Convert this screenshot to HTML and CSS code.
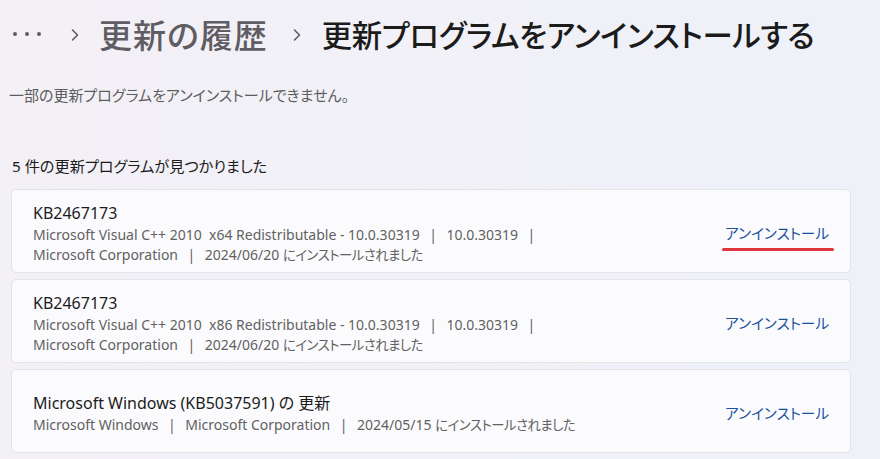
FILE: index.html
```html
<!DOCTYPE html>
<html lang="ja">
<head>
<meta charset="utf-8">
<link rel="stylesheet" href="styles.css">
</head>
<body>
<div class="page">
  <div class="crumbs">
    <span class="more"><i></i><i></i><i></i></span>
    <svg class="chev" width="8" height="14" viewBox="0 0 8 14"><path d="M1.5 2 L6.5 7 L1.5 12" fill="none" stroke="#5f5c63" stroke-width="1.6" stroke-linecap="round" stroke-linejoin="round"/></svg>
    <span class="parent">更新の履歴</span>
    <svg class="chev" width="8" height="14" viewBox="0 0 8 14"><path d="M1.5 2 L6.5 7 L1.5 12" fill="none" stroke="#5f5c63" stroke-width="1.6" stroke-linecap="round" stroke-linejoin="round"/></svg>
    <span class="current">更新プログラムをアンインストールする</span>
  </div>
  <p class="note">一部の更新プログラムをアンインストールできません。</p>
  <p class="count">5 件の更新プログラムが見つかりました</p>
  <div class="list">
    <div class="card">
      <div class="info">
        <div class="name">KB2467173</div>
        <div class="meta">Microsoft Visual C++ 2010&nbsp; x64 Redistributable - 10.0.30319<span class="sep">|</span>10.0.30319<span class="sep">|</span></div>
        <div class="meta">Microsoft Corporation<span class="sep">|</span>2024/06/20 <span class="ja">にインストールされました</span></div>
      </div>
      <div class="action marked">アンインストール</div>
    </div>
    <div class="card">
      <div class="info">
        <div class="name">KB2467173</div>
        <div class="meta">Microsoft Visual C++ 2010&nbsp; x86 Redistributable - 10.0.30319<span class="sep">|</span>10.0.30319<span class="sep">|</span></div>
        <div class="meta">Microsoft Corporation<span class="sep">|</span>2024/06/20 <span class="ja">にインストールされました</span></div>
      </div>
      <div class="action">アンインストール</div>
    </div>
    <div class="card">
      <div class="info">
        <div class="name">Microsoft Windows (KB5037591) の 更新</div>
        <div class="meta">Microsoft Windows<span class="sep">|</span>Microsoft Corporation<span class="sep">|</span>2024/05/15 <span class="ja">にインストールされました</span></div>
      </div>
      <div class="action">アンインストール</div>
    </div>
  </div>
</div>
</body>
</html>
```
FILE: styles.css
```css
html, body {
  margin: 0;
  height: 100%;
}
body {
  background: linear-gradient(to right, #f3f0f6, #f1f1f7 50%, #eef1f8);
  font-family: "Noto Sans", "Noto Sans CJK JP", sans-serif;
  font-feature-settings: "palt";
  color: #1b1b1b;
  overflow: hidden;
}
.page {
  padding: 0 29px 0 11px;
}
.crumbs {
  display: flex;
  align-items: center;
  height: 68px;
  font-family: "Noto Sans CJK JP", sans-serif;
  font-weight: 500;
  white-space: nowrap;
}
.more {
  display: flex;
  gap: 8px;
  margin-left: 2px;
}
.more i {
  width: 4px;
  height: 4px;
  border-radius: 50%;
  background: #5f5c63;
}
.chev {
  flex: none;
  margin: 2px 20px 0 30px;
}
.parent + .chev {
  margin-left: 25px;
  margin-right: 21px;
}
.parent {
  font-size: 33px;
  color: #5f5c63;
  letter-spacing: 1px;
}
.current {
  font-size: 30.4px;
  color: #1b1b1b;
  letter-spacing: -0.35px;
}
.note {
  margin: 16px 0 0 -2px;
  font-size: 15px;
  color: #5d5d5d;
  line-height: 22px;
  font-family: "Noto Sans CJK JP", sans-serif;
}
.count {
  margin: 49px 0 0 1px;
  font-size: 15.2px;
  line-height: 22px;
  color: #1b1b1b;
  font-family: "Noto Sans", "Noto Sans CJK JP", sans-serif;
}
.list {
  margin-top: 12px;
  display: flex;
  flex-direction: column;
  gap: 6px;
}
.card {
  height: 84px;
  box-sizing: border-box;
  background: #fbfbfd;
  border: 1px solid #e4e4e8;
  border-radius: 5px;
  display: flex;
  align-items: center;
  padding: 4px 21px 0 21px;
}
.info {
  flex: 1;
}
.name {
  font-size: 16px;
  line-height: 23px;
  color: #1b1b1b;
}
.meta {
  font-size: 14px;
  line-height: 20px;
  color: #616161;
  white-space: nowrap;
}
.ja {
  font-size: 13.4px;
  letter-spacing: -0.5px;
}
.sep {
  color: #616161;
  margin: 0 9.5px;
}
.action {
  position: relative;
  top: -1px;
  font-size: 14.6px;
  color: #1a519f;
  font-family: "Noto Sans CJK JP", sans-serif;
}
.marked::after {
  content: "";
  position: absolute;
  left: -3px;
  right: -5px;
  bottom: -8px;
  height: 3px;
  border-radius: 2px;
  background: #e1353d;
}
```
